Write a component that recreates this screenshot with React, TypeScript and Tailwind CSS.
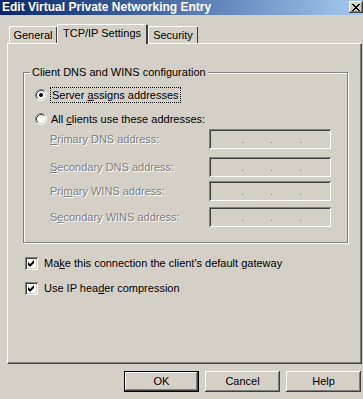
import React from 'react';

const raised = 'shadow-[inset_-1px_-1px_#404040,inset_1px_1px_#ffffff,inset_-2px_-2px_#808080]';
const sunken = 'shadow-[inset_1px_1px_#808080,inset_-1px_-1px_#ffffff,inset_2px_2px_#404040,inset_-2px_-2px_#d4d0c8]';
const dim = 'text-[#808080] [text-shadow:1px_1px_0_#ffffff]';

const Radio: React.FC<{ checked?: boolean }> = ({ checked }) => (
  <svg width="12" height="12" viewBox="0 0 12 12" className="shrink-0">
    <circle cx="6" cy="6" r="5" fill="#ffffff" />
    <path d="M2.11 9.89A5.5 5.5 0 0 1 9.89 2.11" stroke="#808080" fill="none" />
    <path d="M9.89 2.11A5.5 5.5 0 0 1 2.11 9.89" stroke="#ffffff" fill="none" />
    <path d="M2.82 9.18A4.5 4.5 0 0 1 9.18 2.82" stroke="#404040" fill="none" />
    <path d="M9.18 2.82A4.5 4.5 0 0 1 2.82 9.18" stroke="#d4d0c8" fill="none" />
    {checked && <circle cx="6" cy="6" r="2" fill="#000000" />}
  </svg>
);

const Check: React.FC = () => (
  <div className={`w-[13px] h-[13px] bg-white shrink-0 ${sunken}`}>
    <svg width="13" height="13" viewBox="0 0 13 13">
      <polygon points="3,5 5,7 9,3 9,6 5,10 3,8" fill="#000000" />
    </svg>
  </div>
);

const IpField: React.FC = () => (
  <div className={`w-[122px] h-[20px] bg-[#d4d0c8] flex items-start pt-[13px] pl-[33px] gap-[28px] ${sunken}`}>
    <span className="w-px h-px bg-[#808080]" />
    <span className="w-px h-px bg-[#808080]" />
    <span className="w-px h-px bg-[#808080]" />
  </div>
);

const Tab: React.FC<{ label: string; active?: boolean; w: string }> = ({ label, active, w }) => (
  <div
    className={
      active
        ? `${w} h-[20px] -mb-px z-10 bg-[#d4d0c8] border-l border-t border-white border-r-2 border-r-[#404040] rounded-t-[2px] flex justify-center pt-[2px]`
        : `${w} h-[17px] bg-[#d4d0c8] border-l border-t border-white border-r border-r-[#404040] rounded-t-[2px] flex justify-center pt-[2px]`
    }
  >
    {label}
  </div>
);

const rows = [
  { pre: '', u: 'P', post: 'rimary DNS address:', mt: 'mt-[2px]' },
  { pre: '', u: 'S', post: 'econdary DNS address:', mt: 'mt-[8px]' },
  { pre: 'Pri', u: 'm', post: 'ary WINS address:', mt: 'mt-[4px]' },
  { pre: 'S', u: 'e', post: 'condary WINS address:', mt: 'mt-[6px]' },
];

const Button: React.FC<{ label: string; def?: boolean }> = ({ label, def }) => (
  <div
    className={`w-[75px] h-[21px] flex items-center justify-center ${
      def ? 'border border-black ' : ''
    }${raised}`}
  >
    {label}
  </div>
);

export default function App() {
  return (
    <div className="w-[363px] h-[399px] bg-[#d4d0c8] overflow-hidden flex flex-col text-[11px] leading-[13px] text-black font-['Liberation_Sans',Arial,sans-serif]">
      {/* title bar */}
      <div className="h-[15px] flex items-start bg-gradient-to-r from-[#0a246a] to-[#a6caf0]">
        <span className="pl-[2px] pt-px font-bold text-white text-[12px] leading-[13px]">
          Edit Virtual Private Networking Entry
        </span>
        <div className={`ml-auto mt-px w-[14px] h-[12px] bg-[#d4d0c8] flex items-center justify-center ${raised}`}>
          <svg width="8" height="7" viewBox="0 0 8 7">
            <path d="M0 0L7 7M1 0L8 7M7 0L0 7M8 0L1 7" stroke="#000000" strokeWidth="1" />
          </svg>
        </div>
      </div>

      <div className="pl-[7px] pt-[9px]">
        {/* tabs */}
        <div className="flex items-end h-[19px] pl-[2px]">
          <Tab label="General" w="w-[48px]" />
          <Tab label="TCP/IP Settings" w="w-[91px]" active />
          <Tab label="Security" w="w-[50px]" />
        </div>

        {/* tab page */}
        <div className="w-[355px] h-[321px] border-l border-t border-white border-r border-b border-r-[#404040] border-b-[#404040] shadow-[inset_-1px_-1px_#808080] pl-[15px] pt-[28px]">
          <div className="relative w-[325px] h-[171px] border border-[#808080] shadow-[1px_1px_0_#ffffff,inset_1px_1px_0_#ffffff] pl-[11px] pt-[14px]">
            <span className="absolute left-[6px] top-[-7px] bg-[#d4d0c8] px-[2px]">
              Client DNS and WINS configuration
            </span>

            <div className="flex items-center h-[16px] gap-[3px]">
              <Radio checked />
              <span className="px-px border border-dotted border-black leading-[14px]">
                Server <u>a</u>ssigns addresses
              </span>
            </div>
            <div className="flex items-center h-[16px] gap-[4px] mt-[8px]">
              <Radio />
              <span>
                All <u>c</u>lients use these addresses:
              </span>
            </div>

            {rows.map((r) => (
              <div key={r.post} className={`flex items-center ${r.mt}`}>
                <span className={`w-[174px] pl-[15px] ${dim}`}>
                  {r.pre}
                  <u>{r.u}</u>
                  {r.post}
                </span>
                <IpField />
              </div>
            ))}
          </div>

          <div className="pl-[2px] mt-[14px] flex items-center h-[13px] gap-[6px]">
            <Check />
            <span>
              Ma<u>k</u>e this connection the client's default gateway
            </span>
          </div>
          <div className="pl-[2px] mt-[12px] flex items-center h-[13px] gap-[6px]">
            <Check />
            <span>
              Use IP hea<u>d</u>er compression
            </span>
          </div>
        </div>
      </div>

      {/* buttons */}
      <div className="flex justify-end gap-[6px] pr-[2px] mt-[7px]">
        <Button label="OK" def />
        <Button label="Cancel" />
        <Button label="Help" />
      </div>
    </div>
  );
}
